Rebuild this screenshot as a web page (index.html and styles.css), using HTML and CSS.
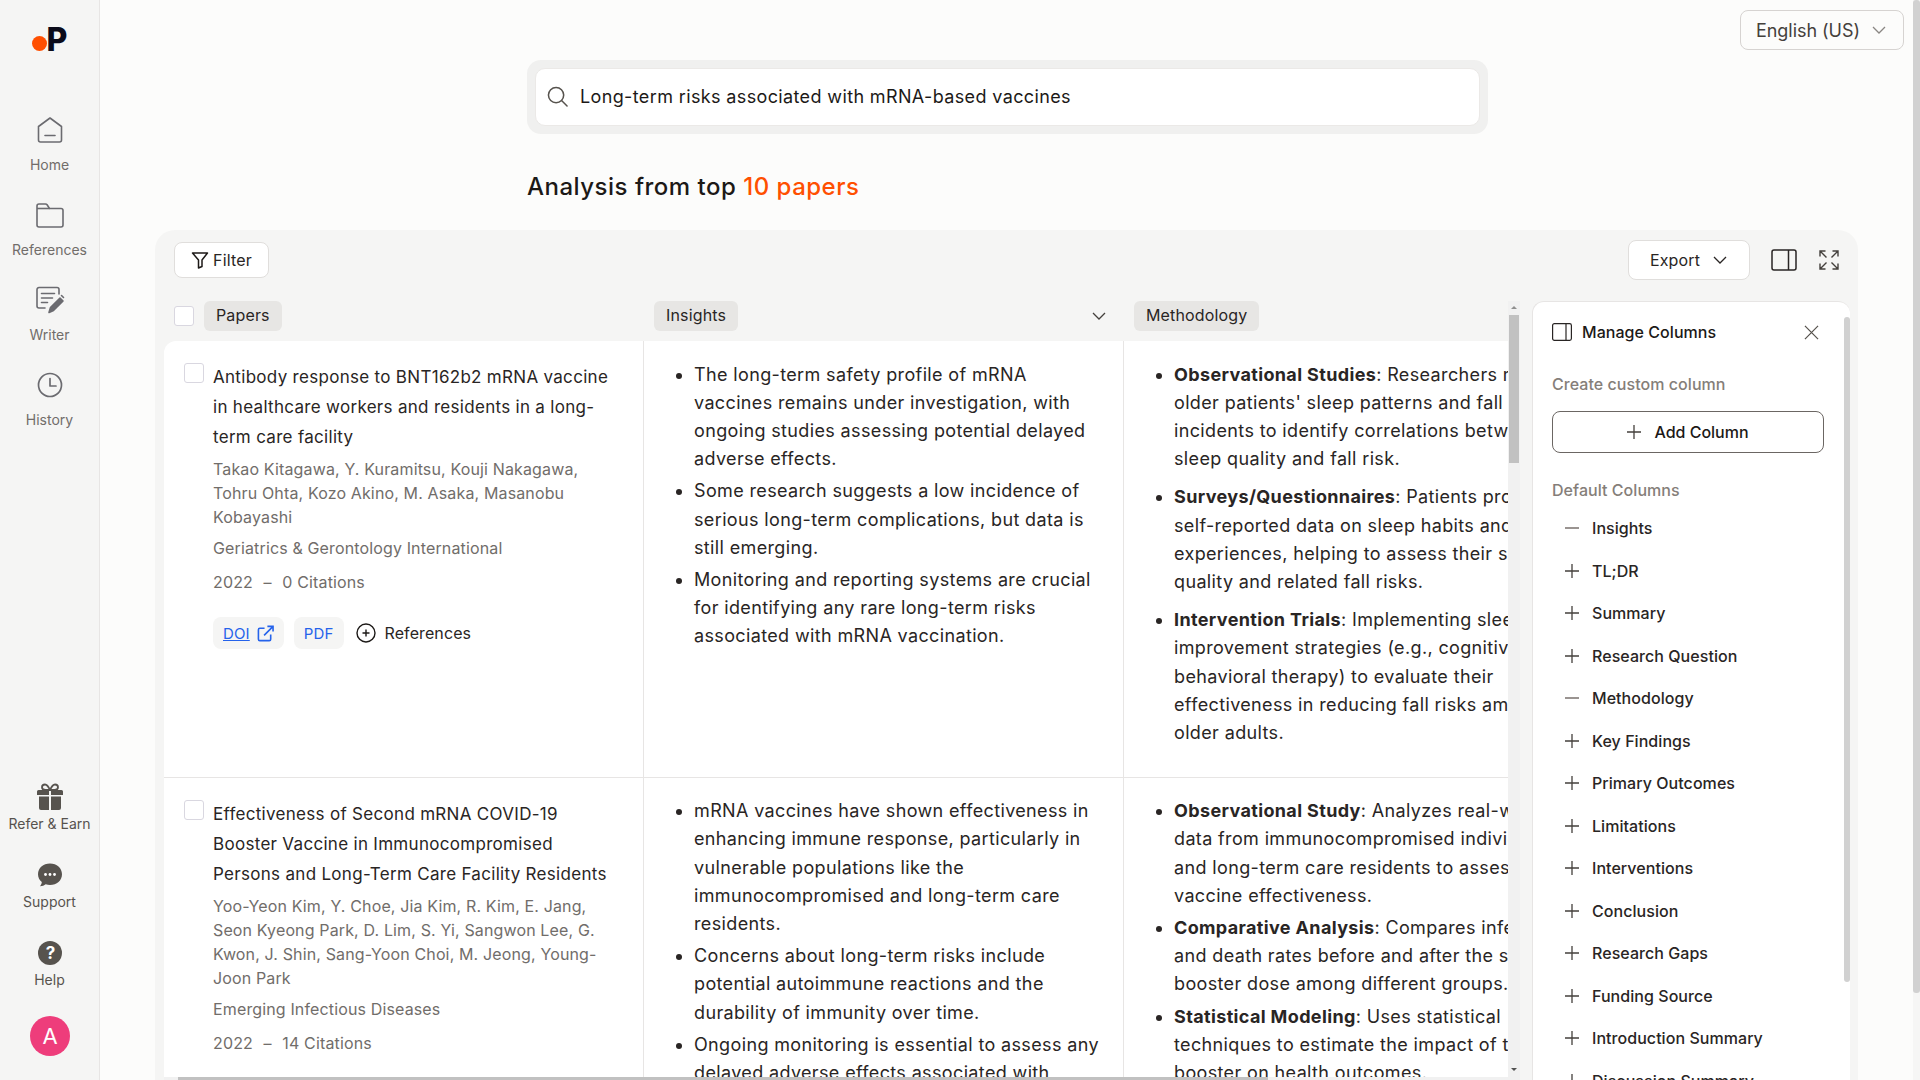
FILE: index.html
```html
<!DOCTYPE html>
<html lang="en">
  <head>
    <meta charset="UTF-8" />
    <title>Analysis from top 10 papers</title>
    <link rel="stylesheet" href="styles.css">
  </head>
  <body>
    <div class="app">
      <aside class="sidebar">
        <div class="logo"><span class="logo-dot"></span><span class="logo-p">P</span></div>
        <nav class="nav-top">
          <a class="nav-item">
            <svg class="nav-icon" viewBox="0 0 30 30" fill="none" stroke="#6b6b70" stroke-width="1.6" stroke-linejoin="round" stroke-linecap="round"><path d="M15 3 26.500 11.500V25a2 2 0 0 1-2 2h-19a2 2 0 0 1-2-2V11.500Z"/><path d="M10 20.500h10"/></svg>
            <span>Home</span>
          </a>
          <a class="nav-item">
            <svg class="nav-icon" viewBox="0 0 30 30" fill="none" stroke="#6b6b70" stroke-width="1.6" stroke-linejoin="round"><path d="M2 6a2 2 0 0 1 2-2h6.500a2 2 0 0 1 1.600.8L14.500 8.500H26a2 2 0 0 1 2 2V25a2 2 0 0 1-2 2H4a2 2 0 0 1-2-2Z"/><path d="M2 8.500h12.500"/></svg>
            <span>References</span>
          </a>
          <a class="nav-item">
            <svg class="nav-icon" viewBox="0 0 30 30" fill="none" stroke="#6b6b70" stroke-width="1.6" stroke-linecap="round" stroke-linejoin="round"><path d="M24 9V4.500a2 2 0 0 0-2-2H4a2 2 0 0 0-2 2V21a2 2 0 0 0 2 2h6"/><path d="M6.500 8.500h13M6.500 13h11M6.500 17.500h6"/><path d="M14 27.500l1.500-5L25 13l3 3-9.500 9.500Z" fill="#6b6b70"/><path d="M26.500 10.500l2 2"/></svg>
            <span>Writer</span>
          </a>
          <a class="nav-item">
            <svg class="nav-icon" viewBox="0 0 30 30" fill="none" stroke="#6b6b70" stroke-width="1.7" stroke-linecap="round" stroke-linejoin="round"><circle cx="15" cy="15" r="11.500"/><path d="M15 8.500V16h6"/></svg>
            <span>History</span>
          </a>
        </nav>
        <div class="nav-bottom">
          <a class="nav-item nav-item-dark">
            <svg class="nav-icon-sm" viewBox="0 0 28 28" fill="#57534e"><path d="M1 8.500a1.500 1.500 0 0 1 1.500-1.500H13v5H1ZM15 7h10.500A1.500 1.500 0 0 1 27 8.500V12H15ZM3 13.500h10V27H5a2 2 0 0 1-2-2ZM15 13.500h10V25a2 2 0 0 1-2 2h-8Z"/><path d="M14 7C12 2.500 10.500 1.500 9 1.500 7.200 1.500 6 2.800 6 4.300 6 6 7.500 7 9.500 7ZM14 7c2-4.500 3.500-5.500 5-5.500 1.800 0 3 1.300 3 2.800C22 6 20.500 7 18.500 7Z" fill="none" stroke="#57534e" stroke-width="1.800"/></svg>
            <span>Refer &amp; Earn</span>
          </a>
          <a class="nav-item nav-item-dark">
            <svg class="nav-icon-sm" viewBox="0 0 28 28"><path d="M14 2.500c6.800 0 12 4.500 12 10.800S20.800 24 14 24c-1.500 0-3-.2-4.300-.7-1.500 1.200-3.400 2-5.700 2 1-1.200 1.700-2.600 1.800-4.200C3.500 19.200 2 16.500 2 13.300 2 7 7.200 2.500 14 2.500Z" fill="#57534e"/><circle cx="9.500" cy="13.500" r="1.400" fill="#fff"/><circle cx="14" cy="13.500" r="1.400" fill="#fff"/><circle cx="18.500" cy="13.500" r="1.400" fill="#fff"/></svg>
            <span>Support</span>
          </a>
          <a class="nav-item nav-item-dark">
            <span class="help-icon">?</span>
            <span>Help</span>
          </a>
          <div class="avatar">A</div>
        </div>
      </aside>

      <main class="main">
        <div class="lang-row">
          <button class="lang-btn">
            English (US)
            <svg class="chev" viewBox="0 0 16 16" fill="none" stroke="#8a8683" stroke-width="1.300"><path d="M2 5l6 6 6-6"/></svg>
          </button>
        </div>

        <div class="search-wrap">
          <div class="search-box">
            <svg class="search-icon" viewBox="0 0 22 22" fill="none" stroke="#57534e" stroke-width="1.600" stroke-linecap="round"><circle cx="9.500" cy="9.500" r="8"/><path d="M15.500 15.500 21 21"/></svg>
            <span>Long-term risks associated with mRNA-based vaccines</span>
          </div>
        </div>

        <h1 class="page-title">Analysis from top <span class="accent">10 papers</span></h1>

        <section class="panel">
          <div class="toolbar">
            <button class="btn btn-filter">
              <svg class="filter-icon" viewBox="0 0 18 18" fill="none" stroke="#1c1917" stroke-width="1.500" stroke-linejoin="round"><path d="M1.500 2h15L11 9v6.500L7.500 17V9Z"/></svg>
              Filter
            </button>
            <div class="toolbar-right">
              <button class="btn btn-export">
                Export
                <svg class="chev" viewBox="0 0 16 16" fill="none" stroke="#292524" stroke-width="1.300"><path d="M2 5l6 6 6-6"/></svg>
              </button>
              <svg class="split-icon" viewBox="0 0 26 22" fill="none" stroke="#292524" stroke-width="1.500"><rect x="1" y="1" width="24" height="20" rx="2"/><path d="M17.500 1v20"/></svg>
              <svg class="expand-icon" viewBox="0 0 20 20" fill="none" stroke="#44403c" stroke-width="1.400"><path d="M1 6.500V1h5.500M1 1l6.500 6.500M13.500 1H19v5.500M19 1l-6.500 6.500M1 13.500V19h5.500M1 19l6.500-6.500M19 13.500V19h-5.500M19 19l-6.500-6.500"/></svg>
            </div>
          </div>

          <div class="workarea">
            <div class="table-area">
              <div class="table-inner">
                <div class="table-view">
                  <div class="table-head">
                    <div class="head-cell">
                      <span class="checkbox"></span>
                      <span class="chip">Papers</span>
                    </div>
                    <div class="head-cell head-cell-split">
                      <span class="chip">Insights</span>
                      <svg class="chev" viewBox="0 0 16 16" fill="none" stroke="#44403c" stroke-width="1.300"><path d="M2 5l6 6 6-6"/></svg>
                    </div>
                    <div class="head-cell">
                      <span class="chip">Methodology</span>
                    </div>
                  </div>

                  <div class="table-body">
                    <div class="row">
                      <div class="cell cell-paper">
                        <span class="checkbox"></span>
                        <div class="paper">
                          <div class="paper-title">Antibody response to BNT162b2 mRNA vaccine in healthcare workers and residents in a long-term care facility</div>
                          <div class="paper-authors">Takao Kitagawa, Y. Kuramitsu, Kouji Nakagawa, Tohru Ohta, Kozo Akino, M. Asaka, Masanobu Kobayashi</div>
                          <div class="paper-journal">Geriatrics &amp; Gerontology International</div>
                          <div class="paper-meta">2022 <span class="dash">–</span> 0 Citations</div>
                          <div class="paper-actions">
                            <a class="link-chip"><span class="doi">DOI</span>
                              <svg class="ext-icon" viewBox="0 0 18 18" fill="none" stroke="#2563eb" stroke-width="1.700"><path d="M8 3.500H3a1.500 1.500 0 0 0-1.500 1.500v10A1.500 1.500 0 0 0 3 16.500h10a1.500 1.500 0 0 0 1.500-1.500v-5"/><path d="M7.500 11 17 1.500M11 1.500h6V7"/></svg>
                            </a>
                            <a class="link-chip">PDF</a>
                            <a class="ref-link">
                              <svg class="ref-icon" viewBox="0 0 20 20" fill="none" stroke="#1c1917" stroke-width="1.400"><circle cx="10" cy="10" r="9"/><path d="M10 6.500v7M6.500 10h7"/></svg>
                              References
                            </a>
                          </div>
                        </div>
                      </div>
                      <div class="cell">
                        <ul class="points">
                          <li>The long-term safety profile of mRNA vaccines remains under investigation, with ongoing studies assessing potential delayed adverse effects.</li>
                          <li>Some research suggests a low incidence of serious long-term complications, but data is still emerging.</li>
                          <li>Monitoring and reporting systems are crucial for identifying any rare long-term risks associated with mRNA vaccination.</li>
                        </ul>
                      </div>
                      <div class="cell">
                        <ul class="points points-loose">
                          <li><b>Observational Studies</b>: Researchers monitor older patients' sleep patterns and fall incidents to identify correlations between sleep quality and fall risk.</li>
                          <li><b>Surveys/Questionnaires</b>: Patients provide self-reported data on sleep habits and experiences, helping to assess their sleep quality and related fall risks.</li>
                          <li><b>Intervention Trials</b>: Implementing sleep improvement strategies (e.g., cognitive behavioral therapy) to evaluate their effectiveness in reducing fall risks among older adults.</li>
                        </ul>
                      </div>
                    </div>

                    <div class="row">
                      <div class="cell cell-paper">
                        <span class="checkbox"></span>
                        <div class="paper">
                          <div class="paper-title">Effectiveness of Second mRNA COVID-19 Booster Vaccine in Immunocompromised Persons and Long-Term Care Facility Residents</div>
                          <div class="paper-authors">Yoo-Yeon Kim, Y. Choe, Jia Kim, R. Kim, E. Jang, Seon Kyeong Park, D. Lim, S. Yi, Sangwon Lee, G. Kwon, J. Shin, Sang-Yoon Choi, M. Jeong, Young-Joon Park</div>
                          <div class="paper-journal">Emerging Infectious Diseases</div>
                          <div class="paper-meta">2022 <span class="dash">–</span> 14 Citations</div>
                        </div>
                      </div>
                      <div class="cell">
                        <ul class="points">
                          <li>mRNA vaccines have shown effectiveness in enhancing immune response, particularly in vulnerable populations like the immunocompromised and long-term care residents.</li>
                          <li>Concerns about long-term risks include potential autoimmune reactions and the durability of immunity over time.</li>
                          <li>Ongoing monitoring is essential to assess any delayed adverse effects associated with</li>
                        </ul>
                      </div>
                      <div class="cell">
                        <ul class="points">
                          <li><b>Observational Study</b>: Analyzes real-world data from immunocompromised individuals and long-term care residents to assess vaccine effectiveness.</li>
                          <li><b>Comparative Analysis</b>: Compares infection and death rates before and after the second booster dose among different groups.</li>
                          <li><b>Statistical Modeling</b>: Uses statistical techniques to estimate the impact of the booster on health outcomes.</li>
                        </ul>
                      </div>
                    </div>
                  </div>
                </div>
                <div class="vscroll">
                  <span class="arrow-up"></span>
                  <span class="vscroll-thumb"></span>
                  <span class="arrow-down"></span>
                </div>
              </div>
              <div class="hscroll"><span class="hscroll-thumb"></span></div>
            </div>

            <aside class="manage">
              <div class="manage-content">
                <div class="manage-head">
                  <svg class="manage-icon" viewBox="0 0 20 18" fill="none" stroke="#292524" stroke-width="1.200"><rect x=".6" y=".6" width="18.800" height="16.800" rx="1.800"/><path d="M14 .6v16.800"/></svg>
                  <span class="manage-title">Manage Columns</span>
                  <svg class="close-icon" viewBox="0 0 16 16" fill="none" stroke="#57534e" stroke-width="1.300"><path d="M1 1l14 14M15 1 1 15"/></svg>
                </div>
                <div class="manage-label">Create custom column</div>
                <button class="add-btn">
                  <svg class="plus" viewBox="0 0 14 14" fill="none" stroke="#44403c" stroke-width="1.300"><path d="M7 0v14M0 7h14"/></svg>
                  Add Column
                </button>
                <div class="manage-label manage-label-default">Default Columns</div>
                <ul class="col-list">
                  <li><svg class="plus" viewBox="0 0 14 14" fill="none" stroke="#78716c" stroke-width="1.500"><path d="M0 7h14"/></svg>Insights</li>
                  <li><svg class="plus" viewBox="0 0 14 14" fill="none" stroke="#44403c" stroke-width="1.300"><path d="M7 0v14M0 7h14"/></svg>TL;DR</li>
                  <li><svg class="plus" viewBox="0 0 14 14" fill="none" stroke="#44403c" stroke-width="1.300"><path d="M7 0v14M0 7h14"/></svg>Summary</li>
                  <li><svg class="plus" viewBox="0 0 14 14" fill="none" stroke="#44403c" stroke-width="1.300"><path d="M7 0v14M0 7h14"/></svg>Research Question</li>
                  <li><svg class="plus" viewBox="0 0 14 14" fill="none" stroke="#78716c" stroke-width="1.500"><path d="M0 7h14"/></svg>Methodology</li>
                  <li><svg class="plus" viewBox="0 0 14 14" fill="none" stroke="#44403c" stroke-width="1.300"><path d="M7 0v14M0 7h14"/></svg>Key Findings</li>
                  <li><svg class="plus" viewBox="0 0 14 14" fill="none" stroke="#44403c" stroke-width="1.300"><path d="M7 0v14M0 7h14"/></svg>Primary Outcomes</li>
                  <li><svg class="plus" viewBox="0 0 14 14" fill="none" stroke="#44403c" stroke-width="1.300"><path d="M7 0v14M0 7h14"/></svg>Limitations</li>
                  <li><svg class="plus" viewBox="0 0 14 14" fill="none" stroke="#44403c" stroke-width="1.300"><path d="M7 0v14M0 7h14"/></svg>Interventions</li>
                  <li><svg class="plus" viewBox="0 0 14 14" fill="none" stroke="#44403c" stroke-width="1.300"><path d="M7 0v14M0 7h14"/></svg>Conclusion</li>
                  <li><svg class="plus" viewBox="0 0 14 14" fill="none" stroke="#44403c" stroke-width="1.300"><path d="M7 0v14M0 7h14"/></svg>Research Gaps</li>
                  <li><svg class="plus" viewBox="0 0 14 14" fill="none" stroke="#44403c" stroke-width="1.300"><path d="M7 0v14M0 7h14"/></svg>Funding Source</li>
                  <li><svg class="plus" viewBox="0 0 14 14" fill="none" stroke="#44403c" stroke-width="1.300"><path d="M7 0v14M0 7h14"/></svg>Introduction Summary</li>
                  <li><svg class="plus" viewBox="0 0 14 14" fill="none" stroke="#44403c" stroke-width="1.300"><path d="M7 0v14M0 7h14"/></svg>Discussion Summary</li>
                </ul>
              </div>
              <div class="manage-scroll"><span class="manage-thumb"></span></div>
            </aside>
          </div>
        </section>
      </main>

      <div class="page-scroll"><span class="page-thumb"></span></div>
    </div>
  </body>
</html>
```

FILE: styles.css
```css
* {
  box-sizing: border-box;
}
html,
body {
  margin: 0;
  height: 100%;
  overflow: hidden;
}
body {
  font-family: Inter, "Liberation Sans", sans-serif;
  font-size: 16px;
  color: #1c1917;
  background-color: #fcfcfb;
}
button {
  font-family: inherit;
}
.app {
  display: flex;
  height: 1080px;
}

/* sidebar */
.sidebar {
  flex: 0 0 100px;
  display: flex;
  flex-direction: column;
  align-items: center;
  background-color: #f5f5f4;
  border-right: 1px solid #e7e5e4;
}
.logo {
  height: 115px;
  padding-top: 21px;
  display: flex;
  align-items: flex-start;
  width: 100%;
  justify-content: center;
}
.logo-dot {
  width: 15px;
  height: 15px;
  margin-top: 15px;
  border-radius: 50%;
  background-color: #ff4f00;
}
.logo-p {
  font-size: 32px;
  line-height: 38px;
  font-weight: 800;
  color: #0b0b1a;
}
.nav-top {
  display: flex;
  flex-direction: column;
  gap: 25px;
}
.nav-bottom {
  margin-top: auto;
  padding-bottom: 24px;
  display: flex;
  flex-direction: column;
  align-items: center;
  gap: 27px;
}
.nav-item {
  display: flex;
  flex-direction: column;
  align-items: center;
  font-size: 14px;
  line-height: 20px;
  color: #716d6a;
}
.nav-icon {
  width: 30px;
  height: 30px;
  margin: 0 0 10px 2px;
}
.nav-item-dark {
  color: #57534e;
}
.nav-icon-sm {
  width: 28px;
  height: 28px;
  margin: 0 0 3px 2px;
}
.help-icon {
  width: 24px;
  height: 24px;
  margin: 2px 0 5px 2px;
  border-radius: 50%;
  background-color: #57534e;
  color: #fff;
  font-size: 17px;
  line-height: 24px;
  font-weight: 700;
  text-align: center;
}
.avatar {
  width: 40px;
  height: 40px;
  border-radius: 50%;
  background-color: #ee3d7b;
  color: #fff;
  font-size: 22px;
  line-height: 40px;
  text-align: center;
  margin: -1px 0 0 1px;
}

/* main column */
.main {
  flex: 1;
  min-width: 0;
  display: flex;
  flex-direction: column;
}
.lang-row {
  height: 60px;
  padding: 10px 9px 0 0;
  display: flex;
  justify-content: flex-end;
}
.lang-btn {
  width: 164px;
  height: 40px;
  padding: 0 16px 0 15px;
  display: flex;
  align-items: center;
  justify-content: space-between;
  font-size: 18px;
  letter-spacing: -0.05px;
  color: #44403c;
  background: none;
  border: 1px solid #d6d3d1;
  border-radius: 8px;
}
.chev {
  width: 16px;
  height: 16px;
}
.search-wrap {
  width: 961px;
  height: 74px;
  margin-left: 427px;
  padding: 8px;
  border-radius: 14px;
  background-color: #f0f0ef;
}
.search-box {
  height: 58px;
  padding: 0 11px 1px;
  display: flex;
  align-items: center;
  gap: 12px;
  font-size: 18px;
  letter-spacing: 0.37px;
  color: #1c1917;
  background-color: #fff;
  border: 1px solid #ebe9e7;
  border-radius: 10px;
}
.search-icon {
  width: 21px;
  height: 21px;
}
.page-title {
  margin: 35px 0 25px 427px;
  font-size: 24px;
  line-height: 36px;
  font-weight: 500;
  letter-spacing: 0.5px;
}
.accent {
  color: #ff4f00;
}

/* results panel */
.panel {
  flex: 1;
  min-height: 0;
  width: 1703px;
  margin-left: 55px;
  padding: 10px 8px 0 9px;
  display: flex;
  flex-direction: column;
  background-color: #f5f5f4;
  border-radius: 20px 20px 0 0;
}
.toolbar {
  height: 40px;
  margin-bottom: 21px;
  padding: 0 11px 0 10px;
  display: flex;
  align-items: center;
  justify-content: space-between;
}
.toolbar-right {
  display: flex;
  align-items: center;
}
.btn {
  display: flex;
  align-items: center;
  font-size: 16px;
  letter-spacing: 0.15px;
  color: #292524;
  background-color: #fff;
  border: 1px solid #e0dedc;
  border-radius: 8px;
}
.btn-filter {
  width: 95px;
  height: 36px;
  justify-content: center;
  gap: 4px;
}
.filter-icon {
  width: 18px;
  height: 18px;
}
.btn-export {
  width: 122px;
  height: 40px;
  justify-content: center;
  gap: 12px;
}
.split-icon {
  width: 26px;
  height: 22px;
  margin: 0 22px 0 21px;
}
.expand-icon {
  width: 20px;
  height: 20px;
}
.workarea {
  flex: 1;
  min-height: 0;
  display: flex;
}
.table-area {
  flex: 0 0 1356px;
  display: flex;
  flex-direction: column;
  min-height: 0;
}
.table-inner {
  flex: 1;
  min-height: 0;
  display: flex;
}
.table-view {
  flex: 0 0 1344px;
  min-width: 0;
  display: flex;
  flex-direction: column;
  overflow: hidden;
}
.table-head {
  display: grid;
  grid-template-columns: repeat(3, 480px);
  height: 30px;
  margin-bottom: 10px;
}
.head-cell {
  display: flex;
  align-items: center;
  gap: 10px;
  padding-left: 10px;
}
.head-cell-split {
  padding: 0 17px 0 10px;
  justify-content: space-between;
}
.chip {
  height: 30px;
  padding: 0 12px;
  font-size: 16px;
  line-height: 28px;
  letter-spacing: 0.15px;
  color: #292524;
  background-color: #e7e6e4;
  border-radius: 6px;
}
.checkbox {
  flex: none;
  width: 20px;
  height: 20px;
  background-color: #fff;
  border: 1px solid #d9d7e0;
  border-radius: 3px;
}
.table-body {
  flex: 1;
  min-height: 0;
  overflow: hidden;
  background-color: #fff;
  border-radius: 12px 0 0 0;
}
.row {
  display: grid;
  grid-template-columns: repeat(3, 480px);
  border-bottom: 1px solid #e7e5e4;
}
.cell {
  padding: 19.500px 19px 29.500px 0;
  border-right: 1px solid #e7e5e4;
}
.cell-paper {
  display: flex;
  gap: 9px;
  padding: 21px 28px 0 20px;
}
.cell-paper .checkbox {
  margin-top: 1px;
}
.paper-title {
  font-size: 17px;
  line-height: 30px;
  letter-spacing: 0.3px;
  color: #292524;
  margin-bottom: 5px;
}
.paper-authors {
  font-size: 16px;
  line-height: 24px;
  letter-spacing: 0.14px;
  color: #716d6a;
}
.paper-journal {
  margin-top: 7px;
  font-size: 16px;
  line-height: 24px;
  letter-spacing: 0.14px;
  color: #716d6a;
}
.paper-meta {
  margin-top: 10px;
  font-size: 16px;
  line-height: 24px;
  letter-spacing: 0.14px;
  color: #716d6a;
}
.dash {
  margin: 0 6px;
}
.paper-actions {
  margin-top: 23px;
  display: flex;
  align-items: center;
  gap: 10px;
}
.link-chip {
  height: 32px;
  padding: 0 10px;
  display: flex;
  align-items: center;
  gap: 7px;
  font-size: 15px;
  letter-spacing: 0.15px;
  color: #2563eb;
  background-color: #f5f5f4;
  border-radius: 8px;
}
.doi {
  text-decoration: underline;
}
.ext-icon {
  width: 17px;
  height: 17px;
}
.ref-link {
  margin-left: 2px;
  display: flex;
  align-items: center;
  gap: 9px;
  font-size: 16px;
  letter-spacing: 0.1px;
  color: #292524;
}
.ref-icon {
  width: 20px;
  height: 20px;
}
.points {
  margin: 0;
  padding-left: 50px;
  font-size: 18px;
  line-height: 28.200px;
  letter-spacing: 0.36px;
  color: #292524;
}
.points li {
  margin-bottom: 4px;
}
.points-loose li {
  margin-bottom: 10px;
}
.points li:last-child {
  margin-bottom: 0;
}
.points b {
  font-weight: 700;
}

/* fake scrollbars */
.vscroll {
  flex: 0 0 12px;
  position: relative;
  background-color: #f1f1f1;
}
.vscroll-thumb {
  position: absolute;
  top: 14px;
  left: 1px;
  width: 10px;
  height: 148px;
  background-color: #c1c1c1;
}
.arrow-up,
.arrow-down {
  position: absolute;
  left: 3px;
  width: 0;
  height: 0;
  border-left: 3px solid transparent;
  border-right: 3px solid transparent;
}
.arrow-up {
  top: 5px;
  border-bottom: 3px solid #8f8f8f;
}
.arrow-down {
  bottom: 6px;
  border-top: 3px solid #505050;
}
.hscroll {
  flex: 0 0 3px;
  background-color: #f1f1f1;
  padding-left: 14px;
}
.hscroll-thumb {
  display: block;
  width: 1090px;
  height: 3px;
  background-color: #c1c1c1;
}

/* manage columns */
.manage {
  flex: 0 0 318px;
  margin-left: 12px;
  display: flex;
  background-color: #fff;
  border: 1px solid #e7e5e4;
  border-width: 1px 0 0 1px;
  border-radius: 12px 12px 0 0;
  overflow: hidden;
}
.manage-content {
  flex: 1;
  min-width: 0;
  padding: 19px 20px 0 19px;
}
.manage-head {
  height: 22px;
  margin-bottom: 30px;
  display: flex;
  align-items: center;
}
.manage-icon {
  width: 20px;
  height: 18px;
  margin-right: 10px;
}
.manage-title {
  font-size: 16px;
  font-weight: 500;
  letter-spacing: 0.05px;
}
.close-icon {
  width: 15px;
  height: 15px;
  margin-left: auto;
  margin-right: 5px;
}
.manage-label {
  font-size: 16px;
  line-height: 22px;
  font-weight: 500;
  letter-spacing: 0.05px;
  color: #857e79;
}
.manage-label-default {
  margin-top: 26px;
}
.add-btn {
  width: 272px;
  height: 42px;
  margin-top: 16px;
  display: flex;
  align-items: center;
  justify-content: center;
  gap: 13px;
  font-size: 16px;
  font-weight: 500;
  color: #1c1917;
  background-color: #fff;
  border: 1px solid #6b6663;
  border-radius: 8px;
}
.plus {
  width: 14px;
  height: 14px;
  flex: none;
}
.col-list {
  list-style: none;
  margin: 6px 0 0;
  padding: 0 0 0 13px;
}
.col-list li {
  height: 42.500px;
  display: flex;
  align-items: center;
  gap: 13px;
  font-size: 16px;
  font-weight: 500;
  letter-spacing: 0.05px;
  color: #292524;
}
.manage-scroll {
  flex: 0 0 6px;
  padding-top: 15px;
}
.manage-thumb {
  display: block;
  height: 665px;
  background-color: #d1d1d1;
  border-radius: 3px;
}

.page-scroll {
  flex: 0 0 7px;
  background-color: #f6f6f5;
}
.page-thumb {
  display: block;
  height: 993px;
  background-color: #d1d1d1;
  border-radius: 3px;
}
```
